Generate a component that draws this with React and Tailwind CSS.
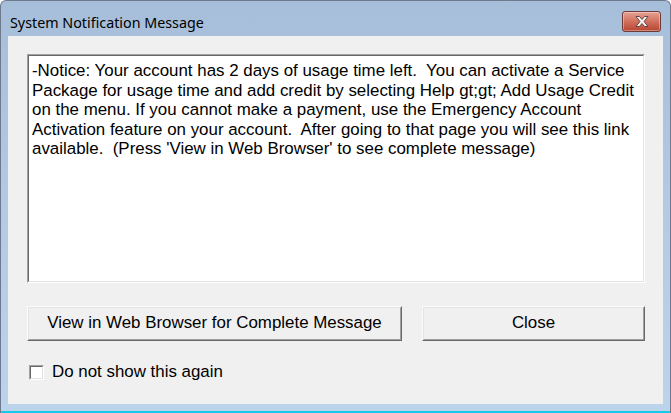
export default function App() {
  const lines = [
    "-Notice: Your account has 2 days of usage time left.  You can activate a Service",
    "Package for usage time and add credit by selecting Help gt;gt; Add Usage Credit",
    "on the menu. If you cannot make a payment, use the Emergency Account",
    "Activation feature on your account.  After going to that page you will see this link",
    "available.  (Press 'View in Web Browser' to see complete message)",
  ];
  const arial = { fontFamily: '"Liberation Sans", Arial, sans-serif' };
  return (
    <div className="w-[671px] h-[413px] bg-white">
      <div className="w-[671px] h-[413px] flex flex-col border border-[#6b7a8c] border-b-0 rounded-t-[6px] bg-gradient-to-b from-[#a6bed9] via-[#b3cae3] to-[#bcd3ec] px-[7px] overflow-hidden relative">
        {/* Title bar */}
        <div className="h-[35px] shrink-0 flex items-start justify-between">
          <div
            className="pt-[13px] pl-[2px] text-[14.3px] text-black leading-[17px]"
            style={{ fontFamily: '"Noto Sans", "Open Sans", sans-serif' }}
          >
            System Notification Message
          </div>
          <div className="mt-[10px] mr-[2px] w-[39px] h-[21px] rounded-[3px] border border-[#6e3a37] bg-gradient-to-b from-[#e6a294] via-[#d0705d] to-[#b9442f] flex items-center justify-center shadow-[inset_0_0_0_1px_rgba(255,255,255,0.35)]">
            <svg width="16" height="13" viewBox="0 0 16 13">
              <path
                d="M2 1.5 L5.5 1.5 L8 4.5 L10.5 1.5 L14 1.5 L10 6.5 L14 11.5 L10.5 11.5 L8 8.5 L5.5 11.5 L2 11.5 L6 6.5 Z"
                fill="#f4f4f4"
                stroke="#5a3a3a"
                strokeWidth="0.9"
                strokeLinejoin="round"
              />
            </svg>
          </div>
        </div>
        {/* Client area */}
        <div className="h-[368px] shrink-0 bg-[#f0f0f0] flex flex-col pl-[19px] pr-[18px] pt-[18px]" style={arial}>
          {/* Textarea */}
          <div className="h-[229px] border border-t-[#a0a0a0] border-l-[#a0a0a0] border-b-white border-r-white">
            <div className="h-full border border-t-[#696969] border-l-[#696969] border-b-[#e3e3e3] border-r-[#e3e3e3] bg-white pl-[3px] pt-[5px]">
              {lines.map((l, i) => (
                <div key={i} className="whitespace-pre text-[16.9px] leading-[19.5px] text-black">
                  {l}
                </div>
              ))}
            </div>
          </div>
          {/* Buttons */}
          <div className="mt-[23px] flex gap-[20px] h-[35px]">
            <div className="w-[375px] h-full border border-t-[#fcfcfc] border-l-[#fcfcfc] border-b-[#696969] border-r-[#696969]">
              <div className="h-full border border-t-[#e3e3e3] border-l-[#e3e3e3] border-b-[#a0a0a0] border-r-[#a0a0a0] bg-[#f0f0f0] flex items-center justify-center text-[16.9px] text-black pb-[1px]">
                View in Web Browser for Complete Message
              </div>
            </div>
            <div className="w-[223px] h-full border border-t-[#fcfcfc] border-l-[#fcfcfc] border-b-[#696969] border-r-[#696969]">
              <div className="h-full border border-t-[#e3e3e3] border-l-[#e3e3e3] border-b-[#a0a0a0] border-r-[#a0a0a0] bg-[#f0f0f0] flex items-center justify-center text-[16.9px] text-black pb-[1px]">
                Close
              </div>
            </div>
          </div>
          {/* Checkbox */}
          <div className="mt-[22px] flex items-center gap-[8px] ml-[2px]">
            <div className="w-[15px] h-[15px] border border-t-[#a0a0a0] border-l-[#a0a0a0] border-b-white border-r-white">
              <div className="w-full h-full border border-t-[#696969] border-l-[#696969] border-b-[#e3e3e3] border-r-[#e3e3e3] bg-white" />
            </div>
            <div className="text-[16.9px] text-black leading-[18px]">Do not show this again</div>
          </div>
        </div>
        <div className="h-[7px] shrink-0" />
        <div className="absolute left-0 right-0 bottom-0 h-[2px] bg-[#18c8e8]" />
      </div>
    </div>
  );
}
